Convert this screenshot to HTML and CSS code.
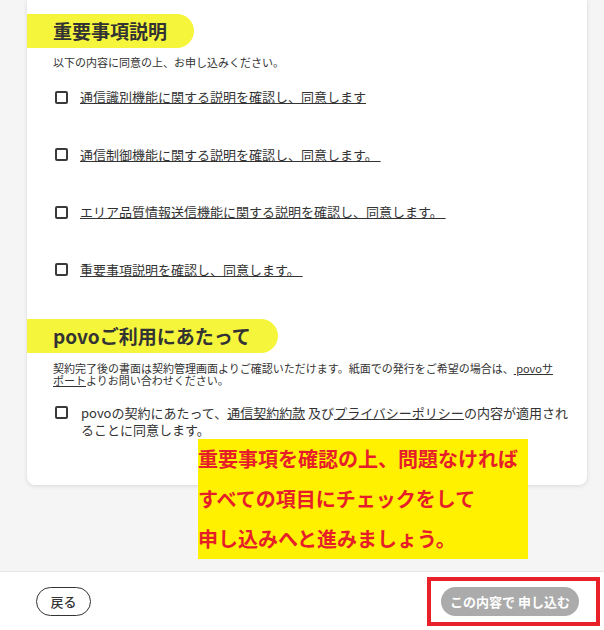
FILE: index.html
```html
<!DOCTYPE html>
<html lang="ja">
<head>
  <meta charset="UTF-8">
  <meta name="viewport" content="width=device-width, initial-scale=1.0">
  <title>povo - 重要事項説明</title>
  <link rel="stylesheet" href="styles.css">
</head>
<body>

  <div class="page">
    <main class="content">
      <section class="card">
        <h2 class="tag">重要事項説明</h2>
        <p class="lead">以下の内容に同意の上、お申し込みください。</p>
        <ul class="checks">
          <li><label class="check"><span class="box"></span><a href="#">通信識別機能に関する説明を確認し、同意します</a></label></li>
          <li><label class="check"><span class="box"></span><a href="#">通信制御機能に関する説明を確認し、同意します。&nbsp;</a></label></li>
          <li><label class="check"><span class="box"></span><a href="#">エリア品質情報送信機能に関する説明を確認し、同意します。&nbsp;</a></label></li>
          <li><label class="check"><span class="box"></span><a href="#">重要事項説明を確認し、同意します。&nbsp;</a></label></li>
        </ul>

        <h2 class="tag tag-second">povoご利用にあたって</h2>
        <p class="note">契約完了後の書面は契約管理画面よりご確認いただけます。紙面での発行をご希望の場合は、<a href="#"> povoサポート</a>よりお問い合わせください。</p>
        <label class="check check-long">
          <span class="box"></span>
          <span class="check-text">povoの契約にあたって、<a href="#">通信契約約款</a> 及び<a href="#">プライバシーポリシー</a>の内容が適用されることに同意します。</span>
        </label>
      </section>

      <div class="callout">重要事項を確認の上、問題なければ<br>すべての項目にチェックをして<br>申し込みへと進みましょう。</div>
    </main>

    <footer class="actions">
      <button class="btn-back" type="button">戻る</button>
      <div class="highlight">
        <button class="btn-submit" type="submit" disabled>この内容で 申し込む</button>
      </div>
    </footer>
  </div>

</body>
</html>
```

FILE: styles.css
```css
body {
  font-family: "Noto Sans CJK JP", "Noto Sans", sans-serif;
  margin: 0;
  padding: 0;
  background-color: #f5f5f5;
  color: #333;
}

.page {
  height: 100vh;
  display: flex;
  flex-direction: column;
}

.content {
  position: relative;
  flex: 1;
  overflow: hidden;
  padding: 0 17px 0 27px;
}

.card {
  background-color: #fff;
  border-radius: 0 0 8px 8px;
  box-shadow: 0 1px 4px rgba(0, 0, 0, 0.12);
  padding: 14px 24px 47px 26px;
}

.tag {
  width: fit-content;
  height: 34px;
  margin: 0 0 0 -26px;
  padding: 0 27px 0 26px;
  background-color: #f5f53c;
  border-radius: 0 17px 17px 0;
  font-size: 19px;
  font-weight: bold;
  line-height: 34px;
  color: #333;
}

.tag-second {
  margin-top: 40px;
}

.lead {
  margin: 7px 0 0;
  font-size: 11px;
  line-height: 14px;
}

.checks {
  list-style: none;
  margin: 19px 0 0;
  padding: 0;
  display: flex;
  flex-direction: column;
  gap: 39.5px;
}

.check {
  display: flex;
  align-items: center;
  font-size: 13px;
  line-height: 18px;
  cursor: pointer;
}

.check a {
  color: #333;
  text-decoration: underline;
}

.box {
  flex: none;
  width: 9px;
  height: 9px;
  margin: 0 12px 0 2px;
  border: 2px solid #3a3a3a;
  border-radius: 2px;
}

.note {
  margin: 9px 0 0;
  font-size: 11px;
  line-height: 12px;
}

.note a {
  color: #333;
}

.check-long {
  align-items: flex-start;
  margin-top: 18px;
  line-height: 17px;
}

.check-long .box {
  margin-top: 2px;
  margin-right: 13px;
}

.check-text {
  margin-right: -10px;
}

.callout {
  position: absolute;
  top: 439px;
  left: 198px;
  width: 330px;
  height: 120px;
  background-color: #fff100;
  color: #e61e2a;
  font-size: 20px;
  font-weight: bold;
  line-height: 40px;
  white-space: nowrap;
}

.actions {
  height: 58px;
  flex: none;
  display: flex;
  justify-content: space-between;
  align-items: center;
  padding: 0 4px 0 36px;
  background-color: #fff;
  border-top: 1px solid #e6e6e6;
}

.btn-back {
  width: 55px;
  height: 29px;
  padding: 0;
  border: 1px solid #333;
  border-radius: 15px;
  background-color: #fff;
  color: #333;
  font-family: inherit;
  font-size: 13px;
  font-weight: 500;
  cursor: pointer;
}

.highlight {
  padding: 6px 17px 6px 10px;
  border: 4px solid #e8202a;
}

.btn-submit {
  display: block;
  width: 138px;
  height: 29px;
  padding: 0;
  border: none;
  border-radius: 15px;
  background-color: #ababab;
  color: #fff;
  font-family: inherit;
  font-size: 13px;
  font-weight: bold;
}
```
